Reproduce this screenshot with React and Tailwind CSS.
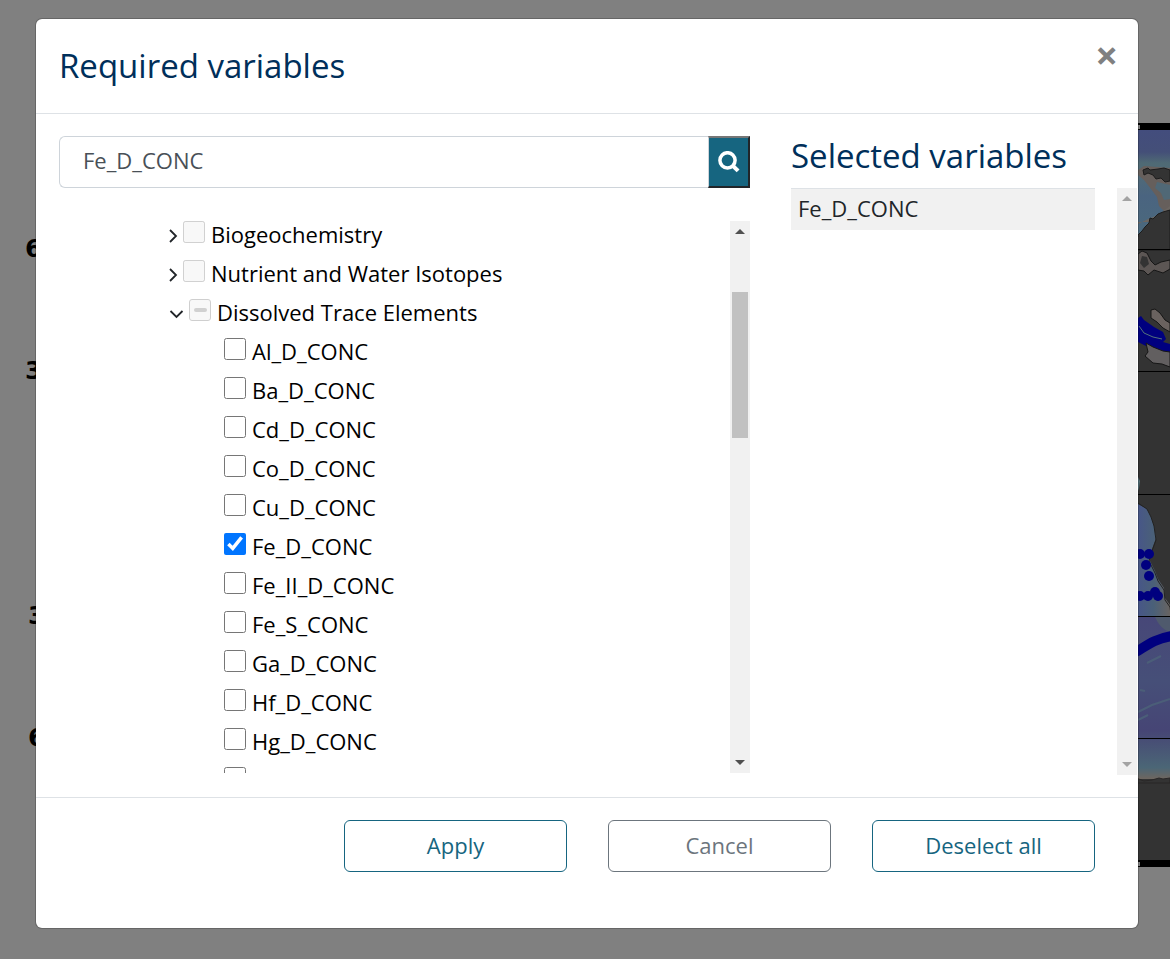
import { useState } from "react";

const groups = [
  { id: "bio", label: "Biogeochemistry" },
  { id: "iso", label: "Nutrient and Water Isotopes" },
  { id: "trace", label: "Dissolved Trace Elements", open: true },
];

const elements = [
  "Al_D_CONC",
  "Ba_D_CONC",
  "Cd_D_CONC",
  "Co_D_CONC",
  "Cu_D_CONC",
  "Fe_D_CONC",
  "Fe_II_D_CONC",
  "Fe_S_CONC",
  "Ga_D_CONC",
  "Hf_D_CONC",
  "Hg_D_CONC",
  "In_D_CONC",
];

function MapBackdrop() {
  return (
    <>
      <svg className="absolute left-0 top-0" width="60" height="959" aria-hidden="true">
        <g fontFamily="DejaVu Sans" fontWeight="700" fontSize="25" fill="#000">
          <text x="25" y="257">6</text>
          <text x="25" y="379">3</text>
          <text x="28" y="624">3</text>
          <text x="28" y="746">6</text>
        </g>
      </svg>
      <svg className="absolute right-0 top-0" width="34" height="959" viewBox="1136 0 34 959" aria-hidden="true">
        <defs>
          <linearGradient id="north" x1="0" y1="0" x2="0" y2="1">
            <stop offset="0" stopColor="#434d7d" />
            <stop offset="0.2" stopColor="#444f78" />
            <stop offset="0.3" stopColor="#4f6a74" />
            <stop offset="0.42" stopColor="#506a78" />
            <stop offset="0.6" stopColor="#4a6480" />
            <stop offset="1" stopColor="#4b6a7c" />
          </linearGradient>
          <linearGradient id="coast" x1="0" y1="0" x2="1" y2="0">
            <stop offset="0" stopColor="#47558a" />
            <stop offset="0.5" stopColor="#4a6078" />
            <stop offset="1" stopColor="#6a6460" />
          </linearGradient>
          <linearGradient id="south" x1="0" y1="0" x2="0" y2="1">
            <stop offset="0" stopColor="#474778" />
            <stop offset="0.4" stopColor="#464f78" />
            <stop offset="0.7" stopColor="#464575" />
            <stop offset="0.93" stopColor="#4b6676" />
            <stop offset="1" stopColor="#6e665f" />
          </linearGradient>
        </defs>
        <rect x="1136" y="123" width="34" height="744" fill="#333" />
        <rect x="1136" y="130" width="34" height="110" fill="url(#north)" />
        <path d="M1138 170l6-4 26 2v43l-5 1-6-6-2-9-6-8-7-9-6-5z" fill="#665f5c" />
        <path d="M1157 182l13 3v14l-6 1-3-7-6-5z" fill="#506876" />
        <path d="M1136 225l10-5 12-5 12-9v16h-34z" fill="#6c6661" />
        <path d="M1138 237v-2l4-4 3-4 4-4 1-5 3 1 5-5 5-2 7-2v40h-34v-11z" fill="#333" stroke="#1c1c1c" />
        <path d="M1143 170l5-2 2 2 8-1 6-1 6 2v11l-5 1-4-4-5 1-3-4-5-2-4 2z" fill="#333" stroke="#1c1c1c" />
        <path d="M1138 254l4-3 5 2 4 8 4 4 6-3 9-2v9l-7 4-9-3-6 5-4-4-6-1z" fill="#5c5654" stroke="#161616" />
        <path d="M1142 256l5 1 2 7-5 4-4-5z" fill="#333" />
        <path d="M1151 310l4-1 5 4 5 7 5 3v9l-7-4-6-6-6-4z" fill="#6a625f" stroke="#161616" />
        <path d="M1138 318l3-2 3 4 10 7 9 5 3 7-3 3 7 2v8l-12-1-10-4-10-5z" fill="#00007f" />
        <path d="M1139 326l5 7 9 4 9 2" stroke="#54727b" fill="none" />
        <path d="M1146 343l7 4 10 4 7 1v15l-8-3-9-1-8-7 3-4z" fill="#625f60" stroke="#161616" />
        <path d="M1136 503l11 6 4 8 3 9 2 12-4 11-3 10 6 12 3 8 6 9 1 10 5 7 1 11h-35z" fill="url(#coast)" />
        <path d="M1138 503l9 6 4 8 3 9 2 14-4 11-3 10 6 12 3 8 6 9 1 10 5 7 1 8" fill="none" stroke="#222" />
        <path d="M1138 477l2 4-1 7-1 3z" fill="#54727b" />
        <rect x="1136" y="616" width="34" height="163" fill="url(#south)" />
        <path d="M1155 617h15v15c-7-2-12-8-15-15z" fill="#4f5a6d" />
        <path d="M1138 712l14-7 18-6M1147 663l14-7M1140 690l5 1M1138 720l10-5" stroke="#4b5e78" strokeWidth="2" fill="none" />
        <path d="M1136 778l8 3 8-1 7-2 4 1 7-1v5h-34z" fill="#333" stroke="#292727" />
        <path d="M1136 652c9-5 17-13 36-16" stroke="#00007f" strokeWidth="10" fill="none" />
        <g fill="#00007f">
          <circle cx="1140" cy="554" r="5" />
          <circle cx="1149" cy="554" r="5" />
          <circle cx="1146" cy="565" r="5" />
          <circle cx="1149" cy="576" r="5" />
          <circle cx="1140" cy="596" r="5" />
          <circle cx="1148" cy="596" r="5" />
          <circle cx="1155" cy="592" r="5" />
          <circle cx="1158" cy="596" r="5" />
        </g>
        <path d="M1136 249.5h34M1136 371.5h34M1136 494.5h34M1136 616.5h34M1136 738.5h34" stroke="#000" />
        <path d="M1136 123h34v7h-34zM1136 860h34v7h-34z" fill="#000" />
        <path d="M1136 125h4v4h-4zM1136 862h4v4h-4z" fill="#808080" />
      </svg>
    </>
  );
}

function ScrollRail({ thumb, arrow }) {
  return (
    <div className="flex w-5 shrink-0 flex-col items-center justify-between bg-[#f1f1f1] py-2" aria-hidden="true">
      <svg width="10" height="5" className={arrow}>
        <path d="M0 5L5 0l5 5z" fill="currentColor" />
      </svg>
      {thumb && (
        <div className="flex w-4 grow flex-col pt-[58px]">
          <div className="h-[146px] bg-[#c1c1c1]" />
        </div>
      )}
      <svg width="10" height="5" className={arrow}>
        <path d="M0 0h10L5 5z" fill="currentColor" />
      </svg>
    </div>
  );
}

function GroupRow({ id, label, open }) {
  return (
    <div className="flex h-[39px] items-center pl-[109px]">
      <button type="button" aria-label={"Toggle " + label} aria-expanded={Boolean(open)} className="mr-1 pt-1 text-[#212529]">
        {open ? (
          <svg width="17" height="12" fill="none" stroke="currentColor" strokeWidth="1.8">
            <path d="M2.5 3l6 6 6-6" />
          </svg>
        ) : (
          <svg width="11" height="14" fill="none" stroke="currentColor" strokeWidth="1.8">
            <path d="M2 1l6 6-6 6" />
          </svg>
        )}
      </button>
      {open ? (
        <input
          id={id}
          type="checkbox"
          disabled
          aria-checked="mixed"
          className="mb-[3px] grid size-[22px] appearance-none place-items-center rounded-[3px] border border-[#cfcfcf] bg-[#f8f8f8] before:h-1 before:w-[13px] before:rounded-full before:bg-[#d1d1d1] before:content-['']"
        />
      ) : (
        <input id={id} type="checkbox" disabled className="mb-[3px] size-[22px]" />
      )}
      <label htmlFor={id} className="pl-[6px]">{label}</label>
    </div>
  );
}

export default function App() {
  const [query, setQuery] = useState("Fe_D_CONC");
  const [selected, setSelected] = useState(["Fe_D_CONC"]);
  const toggle = (name) =>
    setSelected((now) => (now.includes(name) ? now.filter((n) => n !== name) : [...now, name]));

  return (
    <div className="relative min-h-screen bg-[#808080] pb-[30px] pl-[35px] pr-[31px] pt-[18px] font-['Open_Sans',sans-serif] text-[22px] leading-[34px] text-[#212529]">
      <MapBackdrop />
      <div role="dialog" aria-labelledby="dialog-title" className="relative rounded-[7px] border border-black/20 bg-white bg-clip-padding">
        <header className="flex items-start justify-between border-b border-[#dee2e6] pb-[23px] pl-[23px] pr-5 pt-[23px]">
          <h1 id="dialog-title" className="text-[33px] leading-12 text-[#002f5a]">Required variables</h1>
          <button type="button" aria-label="Close" className="text-[40px] leading-[26px] font-bold text-[#808080]">×</button>
        </header>

        <div className="grid grid-cols-[1fr_347px] gap-[41px] pl-[23px] pt-[22px]">
          <section className="flex flex-col gap-[33px] pb-6">
            <form className="flex h-[52px]" onSubmit={(e) => e.preventDefault()}>
              <input
                type="text"
                aria-label="Search variables"
                value={query}
                onChange={(e) => setQuery(e.target.value)}
                className="min-w-0 grow rounded-l-[6px] border border-r-0 border-[#ced4da] px-[23px] pb-1 text-[#495057] outline-none"
              />
              <button type="submit" aria-label="Search" className="flex w-[42px] items-center justify-center border-2 border-l border-b-[#212529] border-l-[#ced4da] border-r-[#212529] border-t-[#767676] bg-[#166580]">
                <svg width="22" height="22" fill="none" stroke="#fff" strokeWidth="3.5">
                  <circle cx="9.5" cy="9.3" r="7.6" />
                  <path d="M14.5 14.5l5.6 5.4" strokeWidth="4" />
                </svg>
              </button>
            </form>
            <div className="flex h-[552px]">
              <div className="grow overflow-hidden text-black">
                <div className="-mt-[7px]">
                  {groups.map((g) => (
                    <GroupRow key={g.id} {...g} />
                  ))}
                  {elements.map((name) => (
                    <div key={name} className="flex h-[39px] items-center pl-[165px]">
                      <input
                        id={name}
                        type="checkbox"
                        checked={selected.includes(name)}
                        onChange={() => toggle(name)}
                        className="mb-[3px] size-[22px]"
                      />
                      <label htmlFor={name} className="pl-[6px]">{name}</label>
                    </div>
                  ))}
                </div>
              </div>
              <ScrollRail thumb arrow="text-[#505050]" />
            </div>
          </section>

          <section className="flex flex-col pb-[22px]">
            <h2 className="pb-3 text-[33px] leading-10 text-[#002f5a]">Selected variables</h2>
            <div className="flex grow pr-px">
              <ul className="mr-[22px] grow">
                {selected.map((name) => (
                  <li key={name} className="h-[42px] border-t border-[#dee2e6] bg-[#f1f1f1] px-[7px] pt-[2px]">{name}</li>
                ))}
              </ul>
              <ScrollRail arrow="text-[#a3a3a3]" />
            </div>
          </section>
        </div>

        <footer className="flex justify-end gap-[41px] border-t border-[#dee2e6] pb-14 pr-[43px] pt-[22px]">
          <button type="button" className="h-[52px] w-[223px] rounded-[6px] border border-[#166580] pb-0.5 text-[#166580]">Apply</button>
          <button type="button" className="h-[52px] w-[223px] rounded-[6px] border border-[#6c757d] pb-0.5 text-[#6c757d]">Cancel</button>
          <button type="button" onClick={() => setSelected([])} className="h-[52px] w-[223px] rounded-[6px] border border-[#166580] pb-0.5 text-[#166580]">Deselect all</button>
        </footer>
      </div>
    </div>
  );
}
